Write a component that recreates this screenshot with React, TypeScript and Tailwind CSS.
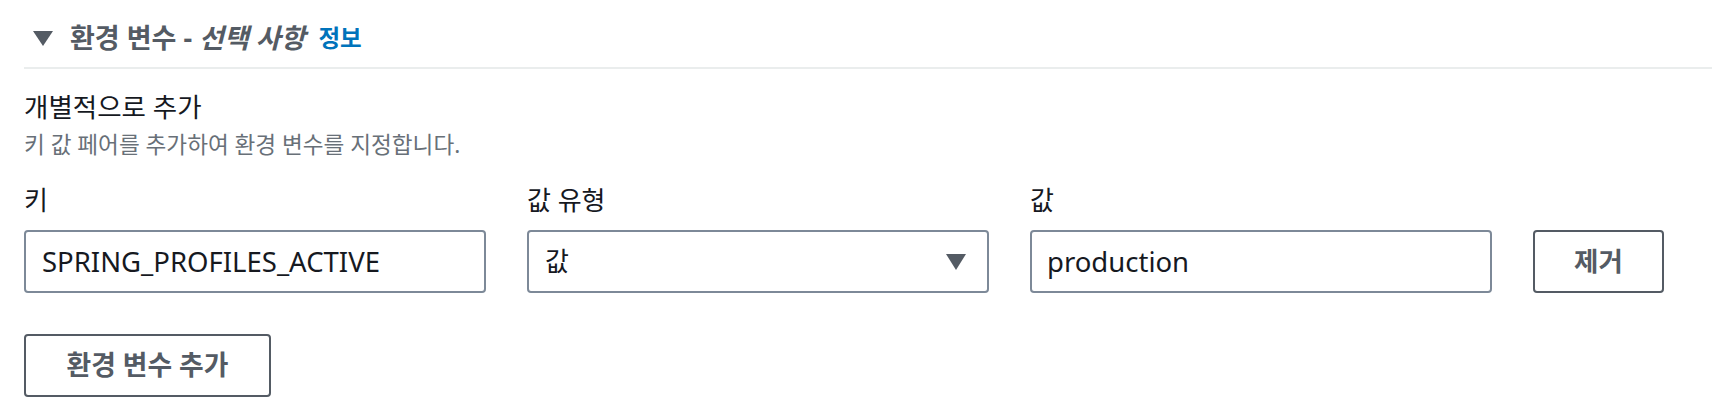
import React from 'react';

interface fieldProps {
    label: string;
    children: React.ReactNode;
}

function Field(prop: fieldProps) {
    return (
        <div className="flex flex-col w-[462px]">
            <label className="h-[32px] leading-[32px] text-[26px] text-[#16191f]">{prop.label}</label>
            <div className="mt-[14px]">{prop.children}</div>
        </div>
    );
}

export default function App() {
    return (
        <div className="w-[1712px] h-[420px] overflow-hidden bg-white font-['Noto_Sans','Noto_Sans_CJK_KR',sans-serif]">
            {/* encabezado */}
            <div className="pt-[16px]">
                <div className="h-[44px] flex items-center pl-[33px]">
                    <svg width="20" height="15" viewBox="0 0 20 15">
                        <polygon points="0,0 20,0 10,15" fill="#545b64" />
                    </svg>
                    <h2 className="ml-[17px] text-[27px] leading-[44px] font-bold text-[#545b64]">
                        환경 변수 - <i>선택 사항</i>
                    </h2>
                    <a className="ml-[13px] text-[23.5px] leading-[44px] font-bold text-[#0073bb] cursor-pointer">정보</a>
                </div>
                <div className="ml-[24px] mt-[7px] h-[2px] bg-[#eaeded]" />
            </div>

            <div className="px-[24px]">
                <div className="mt-[20px] text-[26.5px] leading-[36px] text-[#16191f]">개별적으로 추가</div>
                <div className="mt-[5px] text-[22.6px] leading-[30px] text-[#687078]">키 값 페어를 추가하여 환경 변수를 지정합니다.</div>

                <div className="mt-[24px] flex items-end gap-[41px]">
                    <Field label="키">
                        <input
                            readOnly
                            value="SPRING_PROFILES_ACTIVE"
                            className="w-full h-[63px] border-2 border-[#7d8998] rounded-[4px] pl-[16px] pr-[17px] text-[27.5px] text-[#16191f] outline-none"
                        />
                    </Field>
                    <Field label="값 유형">
                        <div className="w-full h-[63px] border-2 border-[#7d8998] rounded-[4px] pl-[16px] pr-[21px] flex items-center justify-between">
                            <span className="text-[26px] text-[#16191f]">값</span>
                            <svg width="20" height="16" viewBox="0 0 20 16">
                                <polygon points="0,0 20,0 10,16" fill="#545b64" />
                            </svg>
                        </div>
                    </Field>
                    <Field label="값">
                        <input
                            readOnly
                            value="production"
                            className="w-full h-[63px] border-2 border-[#7d8998] rounded-[4px] pl-[15px] pr-[17px] text-[27.5px] text-[#16191f] outline-none"
                        />
                    </Field>
                    <button className="w-[131px] h-[63px] border-2 border-[#545b64] rounded-[4px] text-[26.5px] font-bold text-[#545b64] bg-white">
                        제거
                    </button>
                </div>

                <button className="mt-[41px] w-[247px] h-[63px] border-2 border-[#545b64] rounded-[4px] text-[26.8px] font-bold text-[#545b64] bg-white">
                    환경 변수 추가
                </button>
            </div>
        </div>
    );
}
